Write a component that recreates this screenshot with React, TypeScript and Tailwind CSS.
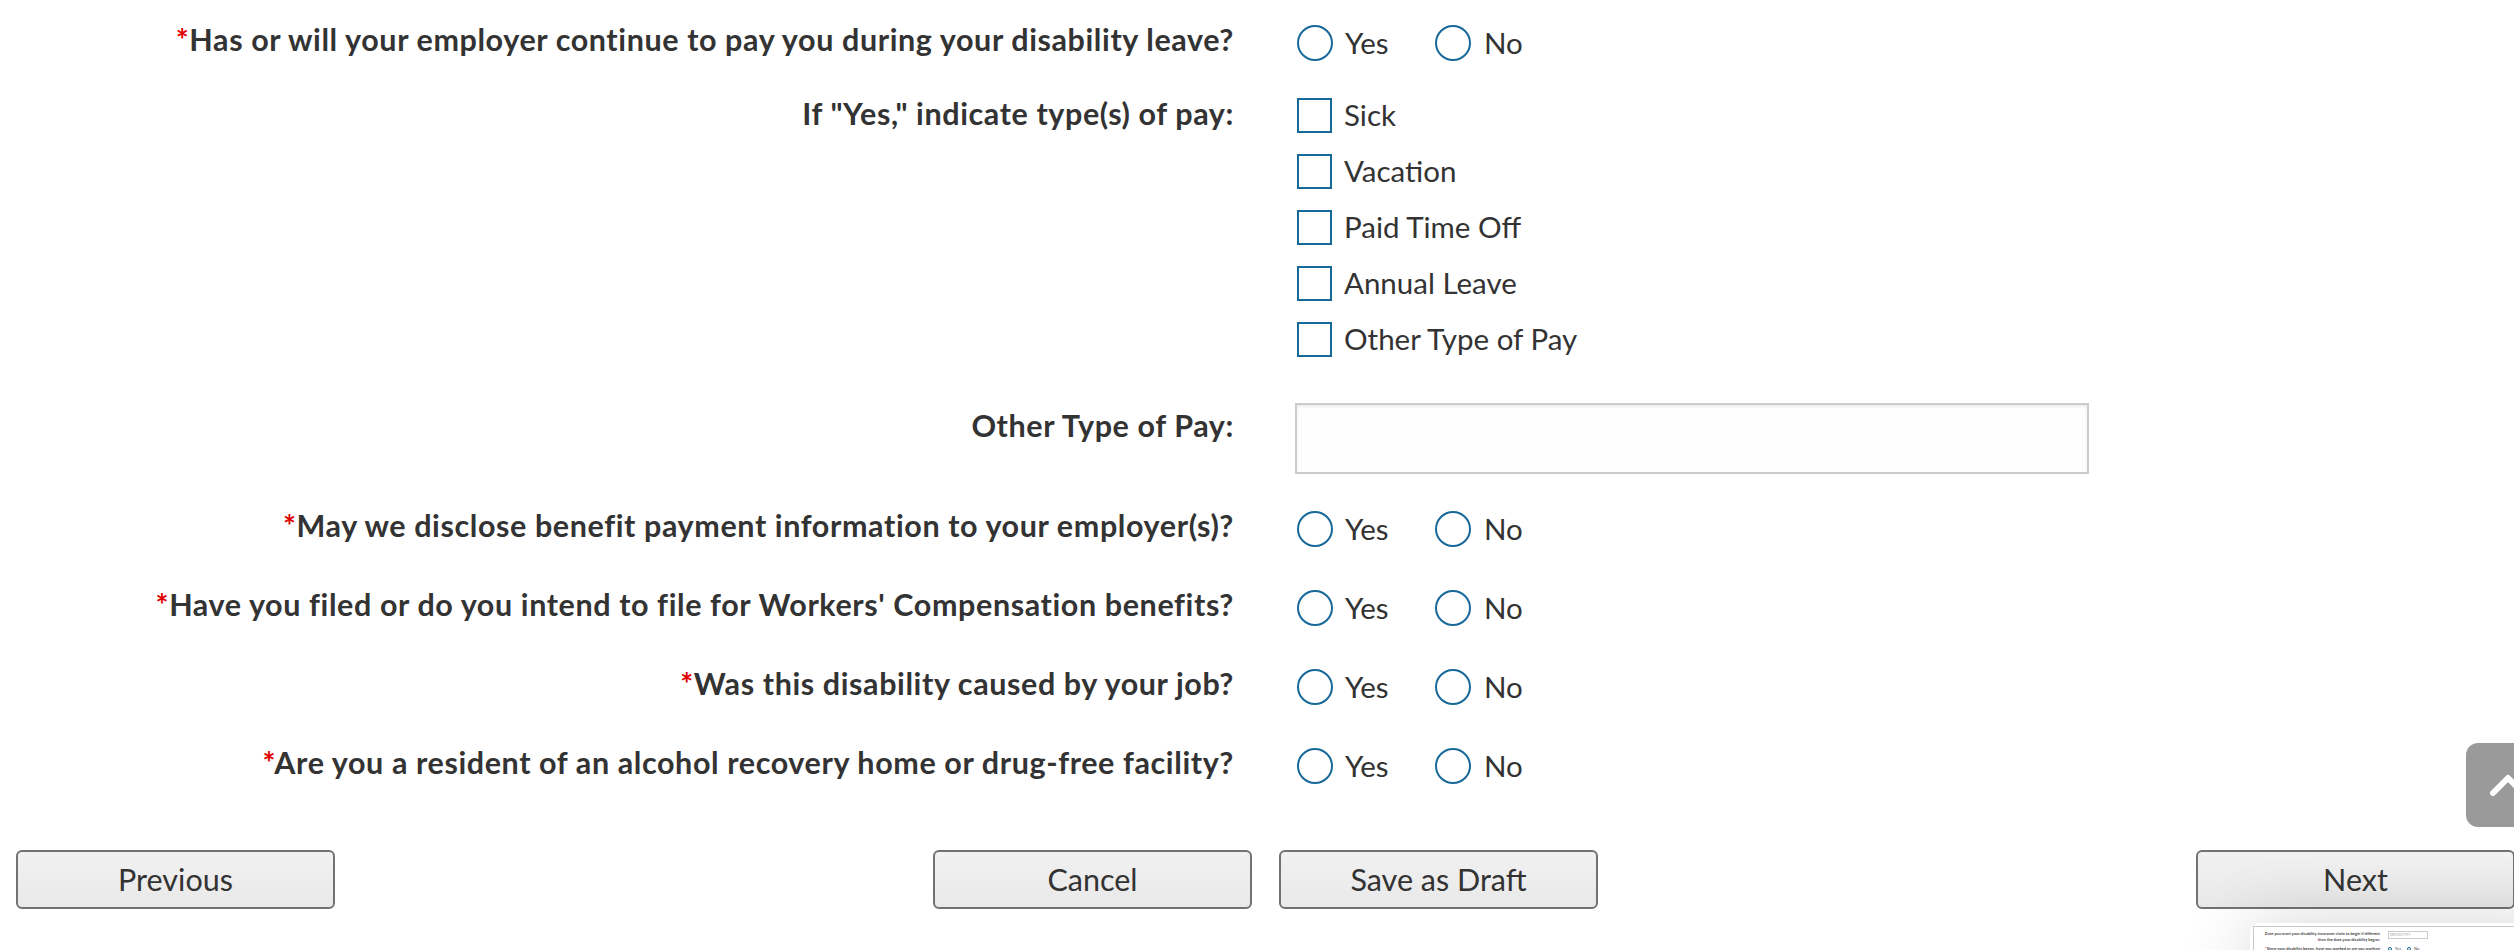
import React from "react";

type RadioRowProps = {
  label: string;
  name: string;
  first?: boolean;
};

const labelCls = "w-[1234px] shrink-0 text-right text-[30.5px] font-bold tracking-[0.6px]";

const RequiredMark = () => <span className="text-[#e00000]">*</span>;

const RadioCircle = () => (
  <span className="block h-[36px] w-[36px] shrink-0 rounded-full border-2 border-[#17699a] bg-white" />
);

const YesNo = ({ name }: { name: string }) => (
  <div className="ml-[7px] mt-[4px] flex h-[44px] items-center" role="radiogroup" aria-label={name}>
    <label className="flex w-[138px] items-center">
      <RadioCircle />
      <span className="ml-[12px]">Yes</span>
    </label>
    <label className="flex items-center">
      <RadioCircle />
      <span className="ml-[13px]">No</span>
    </label>
  </div>
);

const RadioRow = ({ label, name, first }: RadioRowProps) => (
  <div className={`flex ${first ? "mt-[29px]" : "mt-[31px]"}`}>
    <div className={`${labelCls} leading-[44px]`}>
      <RequiredMark />
      {label}
    </div>
    <div className="ml-[56px]">
      <YesNo name={name} />
    </div>
  </div>
);

const payTypes = ["Sick", "Vacation", "Paid Time Off", "Annual Leave", "Other Type of Pay"];

const NavButton = ({ children }: { children: React.ReactNode }) => (
  <button
    type="button"
    className="h-[59px] w-[319px] rounded-[6px] border-2 border-[#727272] bg-gradient-to-b from-[#f1f1f1] to-[#e9e9e9] text-[30.5px] text-[#333]"
  >
    {children}
  </button>
);

export default function App() {
  return (
    <div className="relative h-[950px] w-full overflow-hidden bg-white font-['Lato','Liberation_Sans',sans-serif] text-[29.5px] text-[#333]">
      <div className="w-[2531px]">
        {/* employer pay */}
        <div className="mt-[17px] flex">
          <div className={`${labelCls} leading-[44px]`}>
            <RequiredMark />
            Has or will your employer continue to pay you during your disability leave?
          </div>
          <div className="ml-[56px]">
            <YesNo name="employerPay" />
          </div>
        </div>

        <div className="mt-[29px] flex">
          <div className={`${labelCls} leading-[38px]`}>If "Yes," indicate type(s) of pay:</div>
          <div className="ml-[63px] mt-[4px] flex flex-col gap-[21px]">
            {payTypes.map((t) => (
              <label key={t} className="flex h-[35px] items-center">
                <span className="block h-[35px] w-[35px] shrink-0 border-2 border-[#17699a] bg-white" />
                <span className="ml-[12px]">{t}</span>
              </label>
            ))}
          </div>
        </div>

        <div className="mt-[46px] flex">
          <div className={`${labelCls} mt-[3px] leading-[38px]`}>Other Type of Pay:</div>
          <input
            type="text"
            className="ml-[61px] h-[71px] w-[794px] border-2 border-[#cccccc] bg-[#fefefe] shadow-[inset_0_2px_3px_rgba(0,0,0,0.07)] outline-none"
          />
        </div>

        <RadioRow first name="disclose" label="May we disclose benefit payment information to your employer(s)?" />
        <RadioRow name="workersComp" label="Have you filed or do you intend to file for Workers' Compensation benefits?" />
        <RadioRow name="causedByJob" label="Was this disability caused by your job?" />
        <RadioRow name="recoveryHome" label="Are you a resident of an alcohol recovery home or drug-free facility?" />

        <div className="mt-[62px] flex items-center justify-between px-[16px]">
          <NavButton>Previous</NavButton>
          <div className="flex gap-[27px]">
            <NavButton>Cancel</NavButton>
            <NavButton>Save as Draft</NavButton>
          </div>
          <NavButton>Next</NavButton>
        </div>
      </div>

      {/* back to top */}
      <button
        type="button"
        aria-label="Back to top"
        className="absolute left-[2466px] top-[743px] flex h-[84px] w-[84px] items-center justify-center rounded-[12px] bg-[#9a9a9a]"
      >
        <svg width="40" height="26" viewBox="0 0 40 26" fill="none">
          <polyline points="5,21 20,6 35,21" stroke="white" strokeWidth="6" strokeLinecap="round" strokeLinejoin="round" />
        </svg>
      </button>

      {/* screenshot thumbnail */}
      <div className="absolute left-[2250px] top-[923px] h-[90px] w-[320px] rounded-[10px] bg-white p-[3px] shadow-[0_0_70px_rgba(0,0,0,0.16)]">
        <div className="h-full w-full border border-[#c8c8c8] px-[4px] pt-[4px] text-[4px] leading-[6px] text-[#444]">
          <div className="flex">
            <div className="w-[122px] text-right font-bold">
              Date you want your disability insurance claim to begin if different than the date your disability began:
            </div>
            <div className="ml-[8px] h-[8px] w-[40px] border border-[#ccc] px-[1px] text-[3px] text-[#999]">MM/DD/YYYY</div>
          </div>
          <div className="mt-[3px] flex">
            <div className="w-[122px] text-right font-bold">
              <span className="text-[#e00000]">*</span>Since your disability began, have you worked or are you working any full or partial days?
            </div>
            <div className="ml-[8px] flex items-start gap-[3px]">
              <span className="mt-[1px] block h-[4px] w-[4px] rounded-full border border-[#17699a]" />
              <span>Yes</span>
              <span className="ml-[3px] mt-[1px] block h-[4px] w-[4px] rounded-full border border-[#17699a]" />
              <span>No</span>
            </div>
          </div>
        </div>
      </div>
    </div>
  );
}
